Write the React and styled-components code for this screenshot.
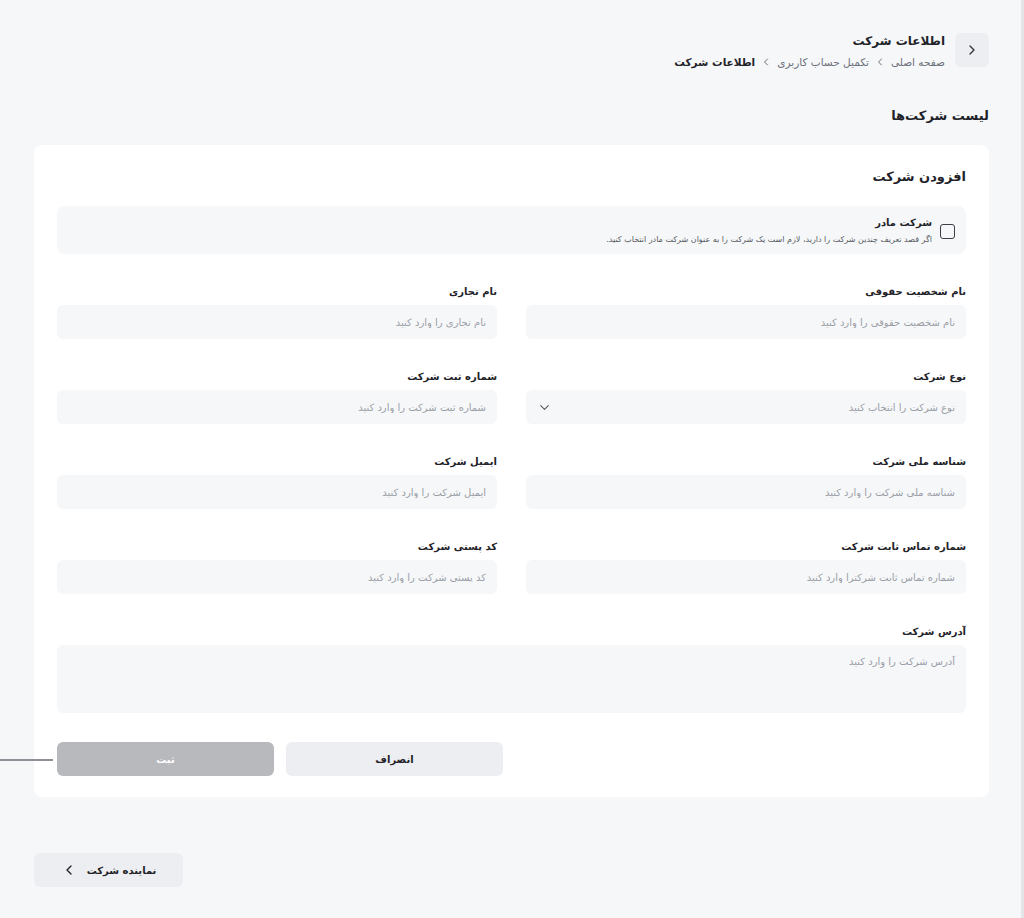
import React from "react";
import styled, { createGlobalStyle } from "styled-components";

const GlobalStyle = createGlobalStyle`
	html, body {
		margin: 0;
		padding: 0;
		background: #f6f7f9;
		font-family: "DejaVu Sans", "Noto Sans", sans-serif;
		color: #1f2329;
	}
	* {
		box-sizing: border-box;
	}
`;

const Page = styled.div`
	direction: rtl;
	min-height: 918px;
	padding: 33px 35px 31px 34px;
	display: flex;
	flex-direction: column;
	overflow: hidden;
	box-shadow: inset -3px 0 0 #e4e5e8;
`;

const Header = styled.div`
	display: flex;
	align-items: flex-start;
	gap: 10px;
`;

const BackButton = styled.button`
	width: 34px;
	height: 34px;
	border: 0;
	border-radius: 6px;
	background: #eceef1;
	color: #30343b;
	display: flex;
	align-items: center;
	justify-content: center;
	padding: 0;
	cursor: pointer;
`;

const TitleBlock = styled.div`
	display: flex;
	flex-direction: column;
	gap: 8px;
	padding-top: 1px;
`;

const PageTitle = styled.h1`
	margin: 0;
	font-size: 12px;
	font-weight: 700;
	color: #1f2329;
`;

const Crumbs = styled.div`
	display: flex;
	align-items: center;
	gap: 5px;
	font-size: 10.5px;
	color: #6b7079;
`;

const Crumb = styled.span`
	font-weight: ${(p) => (p.$active ? 700 : 400)};
	color: ${(p) => (p.$active ? "#1f2329" : "#6b7079")};
`;

const SectionTitle = styled.h2`
	margin: 40px 0 0;
	font-size: 13px;
	font-weight: 700;
`;

const Card = styled.div`
	margin-top: 22px;
	background: #fff;
	border-radius: 8px;
	padding: 24px 23px 21px;
`;

const CardTitle = styled.h3`
	margin: 0;
	font-size: 13px;
	font-weight: 700;
`;

const ParentBox = styled.label`
	margin-top: 22px;
	height: 48px;
	background: #f6f7f9;
	border-radius: 8px;
	padding: 0 11px;
	display: flex;
	align-items: center;
	gap: 8px;
`;

const CheckBox = styled.span`
	width: 15px;
	height: 15px;
	border: 1.5px solid #3a3f47;
	border-radius: 3px;
	flex-shrink: 0;
	margin-top: 2px;
`;

const ParentText = styled.div`
	display: flex;
	flex-direction: column;
	gap: 7px;
`;

const ParentTitle = styled.span`
	font-size: 10px;
	font-weight: 700;
`;

const ParentHint = styled.span`
	font-size: 8px;
	color: #55595f;
`;

const Grid = styled.div`
	margin-top: 32px;
	display: grid;
	grid-template-columns: 1fr 1fr;
	column-gap: 29px;
	row-gap: 32px;
`;

const Field = styled.div`
	display: flex;
	flex-direction: column;
	gap: 8px;
	grid-column: ${(p) => (p.$wide ? "1 / -1" : "auto")};
`;

const Label = styled.span`
	font-size: 10px;
	font-weight: 700;
	color: #1f2329;
`;

const Input = styled.input`
	height: 34px;
	border: 0;
	border-radius: 6px;
	background: #f6f7f9;
	padding: 0 11px;
	font-family: inherit;
	font-size: 10px;
	color: #1f2329;
	direction: rtl;
	outline: none;
	&::placeholder {
		color: #9a9ea6;
	}
`;

const SelectBox = styled.div`
	height: 34px;
	border-radius: 6px;
	background: #f6f7f9;
	padding: 0 11px;
	display: flex;
	align-items: center;
	justify-content: space-between;
	font-size: 10px;
	color: #9a9ea6;
`;

const TextArea = styled.textarea`
	height: 68px;
	border: 0;
	border-radius: 6px;
	background: #f6f7f9;
	padding: 11px;
	resize: none;
	font-family: inherit;
	font-size: 10px;
	direction: rtl;
	outline: none;
	&::placeholder {
		color: #9a9ea6;
	}
`;

const Actions = styled.div`
	margin-top: 29px;
	display: flex;
	justify-content: flex-end;
	gap: 12px;
`;

const Button = styled.button`
	position: relative;
	width: 217px;
	height: 34px;
	border: 0;
	border-radius: 6px;
	font-family: inherit;
	font-size: 10px;
	font-weight: 700;
	background: ${(p) => (p.$primary ? "#b8b9bd" : "#eceef1")};
	color: ${(p) => (p.$primary ? "#fff" : "#1f2329")};
	cursor: pointer;
	${(p) =>
		p.$primary &&
		`
		&::before {
			content: "";
			position: absolute;
			top: 50%;
			left: -80px;
			width: 76px;
			height: 2px;
			background: #8e9197;
		}
	`}
`;

const NextButton = styled.button`
	margin-top: 56px;
	align-self: flex-end;
	width: 149px;
	height: 34px;
	border: 0;
	border-radius: 6px;
	background: #eceef1;
	display: flex;
	align-items: center;
	justify-content: center;
	gap: 10px;
	font-family: inherit;
	font-size: 10px;
	font-weight: 700;
	color: #1f2329;
	direction: rtl;
	cursor: pointer;
`;

// chevron drawn by hand so its direction does not depend on the page direction
const Chevron = ({ dir = "right", size = 16, width = 2, color = "currentColor" }) => {
	const points = {
		right: "9 6 15 12 9 18",
		left: "15 6 9 12 15 18",
		down: "6 9 12 15 18 9",
	}[dir];
	return (
		<svg width={size} height={size} viewBox="0 0 24 24" fill="none" stroke={color} strokeWidth={width} strokeLinecap="round" strokeLinejoin="round">
			<polyline points={points} />
		</svg>
	);
};

const fields = [
	{ label: "نام شخصیت حقوقی", placeholder: "نام شخصیت حقوقی را وارد کنید" },
	{ label: "نام تجاری", placeholder: "نام تجاری را وارد کنید" },
	{ label: "نوع شرکت", placeholder: "نوع شرکت را انتخاب کنید", select: true },
	{ label: "شماره ثبت شرکت", placeholder: "شماره ثبت شرکت را وارد کنید" },
	{ label: "شناسه ملی شرکت", placeholder: "شناسه ملی شرکت را وارد کنید" },
	{ label: "ایمیل شرکت", placeholder: "ایمیل شرکت را وارد کنید" },
	{ label: "شماره تماس ثابت شرکت", placeholder: "شماره تماس ثابت شرکترا وارد کنید" },
	{ label: "کد پستی شرکت", placeholder: "کد پستی شرکت را وارد کنید" },
];

function App() {
	return (
		<>
			<GlobalStyle />
			<Page>
				<Header>
					<BackButton>
						<Chevron dir="right" size={16} />
					</BackButton>
					<TitleBlock>
						<PageTitle>اطلاعات شرکت</PageTitle>
						<Crumbs>
							<Crumb>صفحه اصلی</Crumb>
							<Chevron dir="left" size={12} />
							<Crumb>تکمیل حساب کاربری</Crumb>
							<Chevron dir="left" size={12} />
							<Crumb $active>اطلاعات شرکت</Crumb>
						</Crumbs>
					</TitleBlock>
				</Header>

				<SectionTitle>لیست شرکت‌ها</SectionTitle>

				<Card>
					<CardTitle>افزودن شرکت</CardTitle>
					<ParentBox>
						<CheckBox />
						<ParentText>
							<ParentTitle>شرکت مادر</ParentTitle>
							<ParentHint>
								اگر قصد تعریف چندین شرکت را دارید، لازم است یک شرکت را به عنوان شرکت مادر انتخاب کنید.
							</ParentHint>
						</ParentText>
					</ParentBox>

					<Grid>
						{fields.map((f) => (
							<Field key={f.label}>
								<Label>{f.label}</Label>
								{f.select ? (
									<SelectBox>
										<span>{f.placeholder}</span>
										<Chevron dir="down" size={15} width={1.8} color="#55595f" />
									</SelectBox>
								) : (
									<Input placeholder={f.placeholder} />
								)}
							</Field>
						))}
						<Field $wide>
							<Label>آدرس شرکت</Label>
							<TextArea placeholder="آدرس شرکت را وارد کنید" />
						</Field>
					</Grid>

					<Actions>
						<Button>انصراف</Button>
						<Button $primary>ثبت</Button>
					</Actions>
				</Card>

				<NextButton>
					<span>نماینده شرکت</span>
					<Chevron dir="left" size={16} />
				</NextButton>
			</Page>
		</>
	);
}

export default App;
